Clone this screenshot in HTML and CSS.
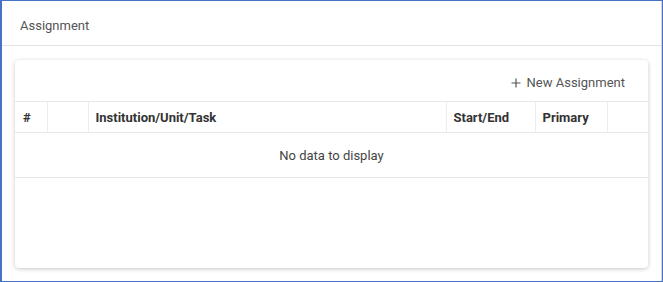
FILE: index.html
```html
<!DOCTYPE html>
<html lang="en">
<head>
    <meta charset="UTF-8">
    <title>Assignment</title>
    <link rel="stylesheet" href="styles.css">
</head>
<body>
<div class="frame">
    <div class="panel">
        <div class="panel-header">Assignment</div>

        <div class="card">
            <div class="toolbar">
                <button class="add-button">
                    <svg class="add-icon" width="10" height="10" viewBox="0 0 10 10">
                        <path d="M5 0.5V9.5M0.5 5H9.5" stroke="#555" stroke-width="1.2" fill="none"/>
                    </svg>
                    New Assignment
                </button>
            </div>

            <table class="grid">
                <colgroup>
                    <col style="width: 32px">
                    <col style="width: 41px">
                    <col style="width: 358px">
                    <col style="width: 89px">
                    <col style="width: 72px">
                    <col>
                </colgroup>
                <thead>
                <tr>
                    <th>#</th>
                    <th></th>
                    <th>Institution/Unit/Task</th>
                    <th>Start/End</th>
                    <th>Primary</th>
                    <th></th>
                </tr>
                </thead>
                <tbody>
                <tr>
                    <td class="empty" colspan="6">No data to display</td>
                </tr>
                </tbody>
            </table>
        </div>
    </div>
</div>
</body>
</html>
```

FILE: styles.css
```css
* {
    box-sizing: border-box;
    margin: 0;
    padding: 0;
}

body {
    font-family: Roboto, "Liberation Sans", sans-serif;
    font-size: 13px;
    color: #333;
    background-color: white;
}

.frame {
    width: 663px;
    height: 282px;
    border: 1px solid #4472c4;
    border-left-width: 2px;
}

.panel {
    height: 100%;
    border-right: 1px solid #d6d6d6;
}

.panel-header {
    height: 45px;
    padding: 17px 0 0 18px;
    border-bottom: 1px solid #e3e3e3;
    color: #555;
    line-height: 16px;
}

.card {
    width: 633px;
    height: 208px;
    margin: 14px 0 0 13px;
    background-color: white;
    border-radius: 4px;
    box-shadow: 0 1px 4px rgba(0, 0, 0, 0.22);
    overflow: hidden;
}

.toolbar {
    display: flex;
    justify-content: flex-end;
    height: 41px;
    padding: 5px 23px 0 0;
}

.add-button {
    display: flex;
    align-items: center;
    gap: 6px;
    border: none;
    background: none;
    font-family: inherit;
    font-size: 13px;
    color: #555;
    line-height: 16px;
    cursor: pointer;
}

.grid {
    width: 100%;
    border-collapse: collapse;
    table-layout: fixed;
}

.grid th {
    height: 31px;
    padding: 0 7px;
    text-align: left;
    font-weight: 700;
    color: #333;
    border-top: 1px solid #e8e8e8;
    border-bottom: 1px solid #e8e8e8;
    border-left: 1px solid #ececec;
}

.grid th:first-child {
    border-left: none;
    padding-left: 8px;
}

.grid td.empty {
    height: 45px;
    text-align: center;
    color: #444;
    border-bottom: 1px solid #e8e8e8;
}
```
